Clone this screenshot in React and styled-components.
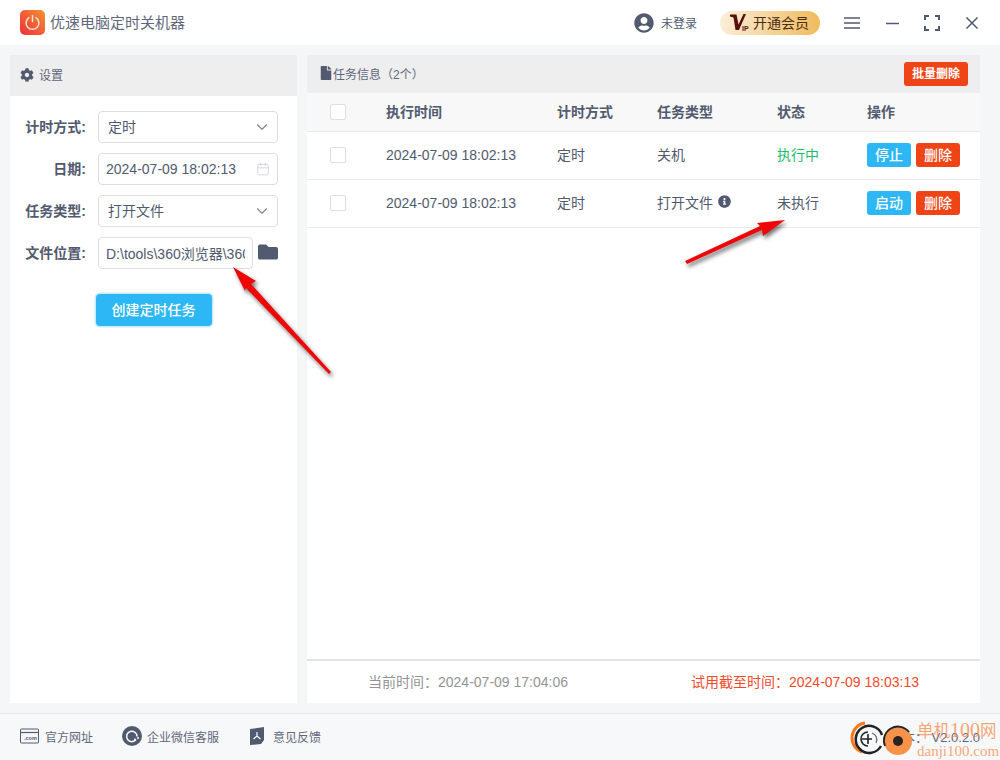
import styled, { createGlobalStyle } from 'styled-components';
import { FaCog, FaFile, FaFolder, FaInfoCircle, FaUserCircle } from 'react-icons/fa';
import { ChevronDown, Calendar } from 'lucide-react';

const GlobalStyle = createGlobalStyle`
  html, body { margin: 0; padding: 0; }
  * { box-sizing: border-box; }
  body {
    font-family: "Liberation Sans", "Noto Sans CJK SC", sans-serif;
    color: #515a6e;
    background: #f5f6f8;
  }
`;

const Page = styled.div`
  position: relative;
  width: 1000px;
  height: 760px;
  overflow: hidden;
  display: flex;
  flex-direction: column;
  background: #f5f6f8;
`;

/* title bar */
const TitleBar = styled.header`
  height: 45px;
  flex: none;
  background: #fff;
  display: flex;
  align-items: center;
  padding: 0 20px;
`;

const AppLogo = styled.div`
  width: 25px;
  height: 25px;
  border-radius: 5px;
  background: linear-gradient(45deg, #ee2f3c, #f39130);
  display: flex;
  align-items: center;
  justify-content: center;
`;

const AppName = styled.div`
  margin-left: 5px;
  padding-bottom: 2px;
  font-size: 15px;
  color: #5f6779;
`;

const TitleRight = styled.div`
  margin-left: auto;
  display: flex;
  align-items: center;
`;

const UserBox = styled.div`
  display: flex;
  align-items: center;
  gap: 7px;
  font-size: 12px;
  margin-right: 23px;
  svg { display: block; }
`;

const VipBadge = styled.div`
  width: 100px;
  height: 24px;
  border-radius: 12px;
  background: linear-gradient(90deg, #fbeeda, #f0bb5c);
  display: flex;
  align-items: center;
  padding: 0 0 1px 10px;
  font-size: 14px;
  color: #4b2c10;
  margin-right: 24px;
`;

const WinButton = styled.div`
  width: 16px;
  height: 16px;
  margin-right: ${({ $gap }) => $gap || 0}px;
  svg { display: block; }
`;

/* main area */
const Main = styled.main`
  flex: 1;
  display: flex;
  gap: 10px;
  padding: 10px 20px 10px 10px;
`;

const LeftPanel = styled.section`
  width: 287px;
  background: #fff;
  display: flex;
  flex-direction: column;
`;

const RightPanel = styled.section`
  flex: 1;
  background: #fff;
  display: flex;
  flex-direction: column;
`;

const PanelHead = styled.div`
  height: ${({ $h }) => $h}px;
  flex: none;
  background: #eeeeee;
  display: flex;
  align-items: center;
  padding: 0 12px 2px ${({ $pl }) => $pl}px;
  font-size: 12px;
  color: #5f6779;
`;

const HeadIcon = styled.span`
  display: flex;
  margin-right: ${({ $gap }) => $gap}px;
  color: #515a6e;
`;

const BatchButton = styled.button`
  margin: 2px 0 0 auto;
  width: 64px;
  height: 24px;
  border: 0;
  border-radius: 3px;
  padding: 0 0 3px;
  background: #ef4416;
  color: #fff;
  font: bold 12px "Liberation Sans", "Noto Sans CJK SC", sans-serif;
`;

/* settings form */
const Form = styled.div`
  padding: 15px 19px 0 0;
  display: flex;
  flex-direction: column;
  gap: 10px;
`;

const FormRow = styled.div`
  display: grid;
  grid-template-columns: 78px 1fr;
  column-gap: 10px;
  align-items: center;
`;

const Label = styled.label`
  text-align: right;
  font-size: 14px;
  font-weight: 700;
  color: #515a6e;
  white-space: nowrap;
  margin: 0 2px 2px 0;
`;

const Field = styled.div`
  height: 32px;
  border: 1px solid #dcdee2;
  border-radius: 4px;
  background: #fff;
  display: flex;
  align-items: center;
  justify-content: space-between;
  padding: 0 ${({ $pr }) => $pr || 6}px 0 ${({ $pl }) => $pl || 9}px;
  font-size: 14px;
  color: #515a6e;
  white-space: nowrap;
  overflow: hidden;
  width: ${({ $w }) => ($w ? `${$w}px` : 'auto')};
`;

const Clipped = styled.span`
  display: block;
  width: 139px;
  overflow: hidden;
`;

const Selected = styled.span`
  padding-bottom: 2px;
`;

const FileRow = styled.div`
  display: flex;
  align-items: center;
  justify-content: space-between;
  svg { margin-bottom: 2px; }
`;

const CreateButton = styled.button`
  align-self: center;
  margin: 15px 0 0 19px;
  width: 116px;
  height: 32px;
  border: 0;
  border-radius: 4px;
  padding: 0 0 2px;
  background: #2db7f5;
  box-shadow: 0 0 0 1.5px #c6ecfd;
  color: #fff;
  font: 500 14px "Liberation Sans", "Noto Sans CJK SC", sans-serif;
`;

/* task table */
const Columns = styled.div`
  display: grid;
  grid-template-columns: 79px 171px 100px 120px 90px 1fr;
  align-items: center;
  border-bottom: 1px solid #e8eaec;
  font-size: 14px;
  padding-bottom: 2px;
`;

const HeadRow = styled(Columns)`
  height: 39px;
  flex: none;
  background: #f8f8f9;
  font-weight: 700;
  padding-bottom: 1px;
`;

const Row = styled(Columns)`
  height: 48px;
  flex: none;
`;

const CheckCell = styled.div`
  padding-left: 23px;
`;

const CheckBox = styled.div`
  width: 16px;
  height: 16px;
  border: 1px solid #dcdee2;
  border-radius: 2px;
  background: #fff;
`;

const TextCell = styled.div`
  padding-bottom: 2px;
`;

const StatusCell = styled(TextCell)`
  color: ${({ $running }) => ($running ? '#19be6b' : '#515a6e')};
`;

const TypeCell = styled(TextCell)`
  display: flex;
  align-items: center;
  gap: 5px;
`;

const Actions = styled.div`
  display: flex;
  gap: 5px;
`;

const ActionButton = styled.button`
  width: 44px;
  height: 24px;
  border: 0;
  border-radius: 3px;
  padding: 0 0 2px;
  background: ${({ $danger }) => ($danger ? '#ef4416' : '#2db7f5')};
  color: #fff;
  font: 500 14px "Liberation Sans", "Noto Sans CJK SC", sans-serif;
`;

const TableSpace = styled.div`
  flex: 1;
`;

const TimeBar = styled.div`
  height: 44px;
  flex: none;
  border-top: 2px solid #e3e4e6;
  display: flex;
  align-items: center;
  justify-content: space-between;
  padding: 0 61px 3px;
  font-size: 14px;
  color: #949494;
`;

const TrialTime = styled.span`
  color: #f1492a;
`;

/* bottom bar */
const BottomBar = styled.footer`
  height: 47px;
  flex: none;
  background: #f7f8fa;
  border-top: 1px solid #e9eaec;
  display: flex;
  align-items: center;
  padding: 0 20px 2px;
  font-size: 12px;
  color: #5f6779;
`;

const BottomLink = styled.div`
  display: flex;
  align-items: center;
  gap: ${({ $gap }) => $gap}px;
  margin-right: ${({ $mr }) => $mr}px;
  svg { display: block; }
`;

const Version = styled.div`
  margin-left: auto;
  font-size: 13px;
`;

/* things lying over the page */
const Overlay = styled.svg`
  position: absolute;
  left: 0;
  top: 0;
  pointer-events: none;
`;

const Arrow = styled.polygon`
  fill: #f00505;
  filter: drop-shadow(2px 3px 2px rgba(0, 0, 0, 0.55));
`;

const Watermark = styled.div`
  position: absolute;
  left: 917px;
  top: 720px;
  color: rgba(243, 138, 70, 0.75);
  white-space: nowrap;
`;

const MarkName = styled.div`
  font-size: 16.5px;
  line-height: 21px;
  font-family: "Liberation Serif", "Noto Sans CJK SC", serif;
`;

const MarkDigits = styled.span`
  font-size: 20px;
`;

const MarkUrl = styled.div`
  font-size: 15px;
  line-height: 17px;
  margin-top: 1px;
  font-family: "Liberation Serif", serif;
`;

const tasks = [
  { time: '2024-07-09 18:02:13', mode: '定时', type: '关机', status: '执行中', running: true, action: '停止' },
  { time: '2024-07-09 18:02:13', mode: '定时', type: '打开文件', info: true, status: '未执行', action: '启动' },
];

function VipMark() {
  return (
    <svg width="23" height="20" viewBox="0 0 23 20">
      <path d="M0 2.5h6.5l2 10 5-10.5h2.5L9 18H5.5L3.5 5.5 0 4.5z" fill="#56100f" />
      <text x="12" y="18.5" fontSize="7" fontWeight="700" fill="#56100f" fontFamily="Liberation Sans">IP</text>
    </svg>
  );
}

function WindowIcons() {
  return (
    <>
      <WinButton $gap={24}>
        <svg width="16" height="16" viewBox="0 0 16 16" stroke="#515a6e" strokeWidth="1.5">
          <path d="M0 3h16M0 8h16M0 13h16" />
        </svg>
      </WinButton>
      <WinButton $gap={24}>
        <svg width="16" height="16" viewBox="0 0 16 16" stroke="#515a6e" strokeWidth="1.5">
          <path d="M2 8.5h13" />
        </svg>
      </WinButton>
      <WinButton $gap={24}>
        <svg width="16" height="16" viewBox="0 0 16 16" fill="none" stroke="#515a6e" strokeWidth="2">
          <path d="M1 5V1h4M11 1h4v4M15 11v4h-4M5 15H1v-4" />
        </svg>
      </WinButton>
      <WinButton>
        <svg width="16" height="16" viewBox="0 0 16 16" stroke="#515a6e" strokeWidth="1.5">
          <path d="M2.5 2.5l11 11M13.5 2.5l-11 11" />
        </svg>
      </WinButton>
    </>
  );
}

function App() {
  return (
    <Page>
      <GlobalStyle />
      <TitleBar>
        <AppLogo>
          <svg width="17" height="17" viewBox="0 0 17 17" fill="none" stroke="#fde3d3" strokeWidth="1.5" strokeLinecap="round">
            <path d="M5 3.6a6.4 6.4 0 1 0 7 0" />
            <path d="M8.5 1.5v6" />
          </svg>
        </AppLogo>
        <AppName>优速电脑定时关机器</AppName>
        <TitleRight>
          <UserBox>
            <FaUserCircle size={20} color="#515a6e" />
            未登录
          </UserBox>
          <VipBadge>
            <VipMark />
            开通会员
          </VipBadge>
          <WindowIcons />
        </TitleRight>
      </TitleBar>

      <Main>
        <LeftPanel>
          <PanelHead $h={41} $pl={10}>
            <HeadIcon $gap={5}><FaCog size={14} /></HeadIcon>
            设置
          </PanelHead>
          <Form>
            <FormRow>
              <Label>计时方式:</Label>
              <Field><Selected>定时</Selected><ChevronDown size={18} color="#808695" strokeWidth={1.5} /></Field>
            </FormRow>
            <FormRow>
              <Label>日期:</Label>
              <Field $pl={7} $pr={7}>2024-07-09 18:02:13<Calendar size={14} color="#c5c8ce" strokeWidth={1.2} /></Field>
            </FormRow>
            <FormRow>
              <Label>任务类型:</Label>
              <Field><Selected>打开文件</Selected><ChevronDown size={18} color="#808695" strokeWidth={1.5} /></Field>
            </FormRow>
            <FormRow>
              <Label>文件位置:</Label>
              <FileRow>
                <Field $w={155} $pl={7} $pr={7}><Clipped>D:\tools\360浏览器\360se6\Application\360se.exe</Clipped></Field>
                <FaFolder size={20} color="#515a6e" />
              </FileRow>
            </FormRow>
            <CreateButton>创建定时任务</CreateButton>
          </Form>
        </LeftPanel>

        <RightPanel>
          <PanelHead $h={38} $pl={12}>
            <HeadIcon $gap={0}><FaFile size={14} /></HeadIcon>
            任务信息（2个）
            <BatchButton>批量删除</BatchButton>
          </PanelHead>
          <HeadRow>
            <CheckCell><CheckBox /></CheckCell>
            <TextCell>执行时间</TextCell>
            <TextCell>计时方式</TextCell>
            <TextCell>任务类型</TextCell>
            <TextCell>状态</TextCell>
            <TextCell>操作</TextCell>
          </HeadRow>
          {tasks.map((task) => (
            <Row key={task.action}>
              <CheckCell><CheckBox /></CheckCell>
              <div>{task.time}</div>
              <TextCell>{task.mode}</TextCell>
              <TypeCell>
                {task.type}
                {task.info && <FaInfoCircle size={13} color="#515a6e" />}
              </TypeCell>
              <StatusCell $running={task.running}>{task.status}</StatusCell>
              <Actions>
                <ActionButton>{task.action}</ActionButton>
                <ActionButton $danger>删除</ActionButton>
              </Actions>
            </Row>
          ))}
          <TableSpace />
          <TimeBar>
            <span>当前时间：2024-07-09 17:04:06</span>
            <TrialTime>试用截至时间：2024-07-09 18:03:13</TrialTime>
          </TimeBar>
        </RightPanel>
      </Main>

      <BottomBar>
        <BottomLink $gap={6} $mr={29}>
          <svg width="19" height="16" viewBox="0 0 19 16" fill="none" stroke="#515a6e">
            <rect x="0.5" y="1" width="18" height="14" rx="1" />
            <path d="M1 4.5h17" strokeWidth="1.2" />
            <text x="4" y="12" fontSize="5.5" fontWeight="700" fill="#515a6e" stroke="none" fontFamily="Liberation Sans">.com</text>
          </svg>
          官方网址
        </BottomLink>
        <BottomLink $gap={5} $mr={31}>
          <svg width="20" height="20" viewBox="0 0 20 20">
            <circle cx="10" cy="10" r="10" fill="#515a6e" />
            <path d="M14 13.5a5.2 5.2 0 1 1 1-3" fill="none" stroke="#fff" strokeWidth="1.5" />
            <circle cx="13" cy="13.5" r="1" fill="#fff" />
            <circle cx="16" cy="12" r="1" fill="#fff" />
          </svg>
          企业微信客服
        </BottomLink>
        <BottomLink $gap={8}>
          <svg width="15" height="18" viewBox="0 0 15 18">
            <path d="M0 2l14-2v13l-3 4-11 1z" fill="#515a6e" />
            <path d="M7 5v4M3.5 12l3.5-3 3.5 3" fill="none" stroke="#fff" strokeWidth="1.2" />
          </svg>
          意见反馈
        </BottomLink>
        <Version>版本： V2.0.2.0</Version>
      </BottomBar>

      <Overlay width="1000" height="760" viewBox="0 0 1000 760">
        <Arrow points="233,267 256,281 251,284 331,372 329,374 246,288 245,291" />
        <Arrow points="785,220 763,236 762,230 687,264 685,261 760,226 757,223" />
        <path d="M862 752a15 15 0 0 1 3-29" fill="none" stroke="#f47a1c" strokeWidth="3" />
        <path d="M864 752a16 16 0 0 0 8 1" fill="none" stroke="#f47a1c" strokeWidth="2" />
        <path d="M881 746a13.5 13.5 0 1 1 1-11" fill="#f7f8fa" stroke="#222" strokeWidth="2.5" />
        <path d="M868 732a7 7 0 1 0 0 14M862 739h10M868 734v10" fill="none" stroke="#222" strokeWidth="1.6" />
        <path d="M872 733a7 7 0 0 1 4 10" fill="none" stroke="#5a6b8c" strokeWidth="1.3" />
        <circle cx="898" cy="741" r="14" fill="#f8924a" />
        <path d="M885 746a14 14 0 0 1 24-14" fill="none" stroke="#222" strokeWidth="1.8" />
        <circle cx="898" cy="741" r="5" fill="#2a2320" />
      </Overlay>
      <Watermark>
        <MarkName>单机<MarkDigits>100</MarkDigits>网</MarkName>
        <MarkUrl>danji100.com</MarkUrl>
      </Watermark>
    </Page>
  );
}

export default App;
